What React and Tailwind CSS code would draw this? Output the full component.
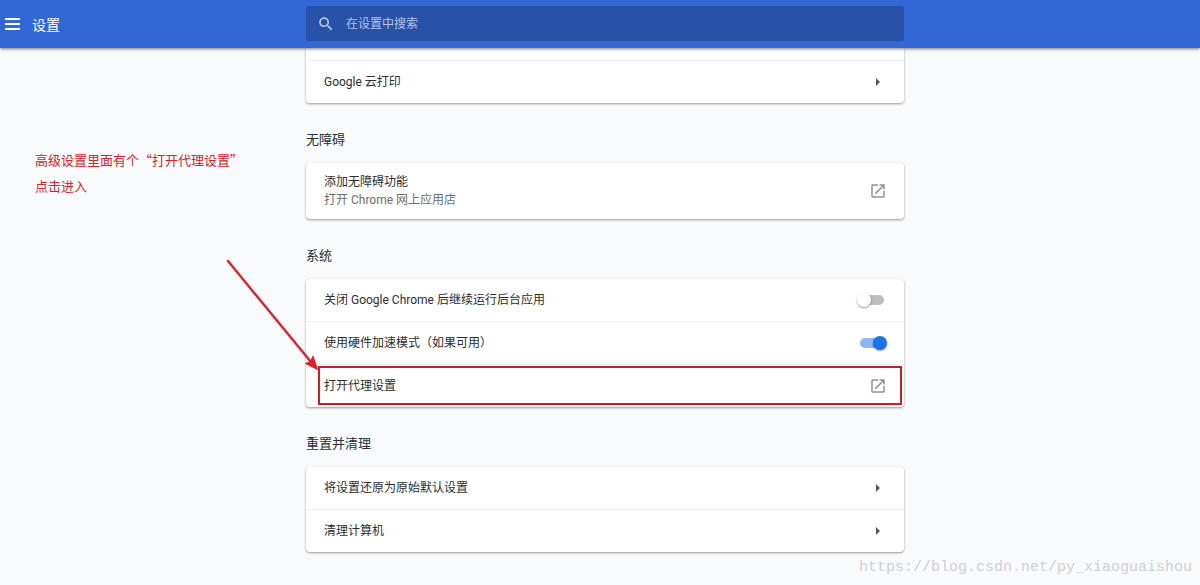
import React from "react";

const columns =
  "grid grid-cols-[minmax(0,calc(50%-294px))_minmax(0,598px)_minmax(0,1fr)]";

function MenuIcon() {
  return (
    <svg width="15" height="12" viewBox="0 0 15 12" fill="currentColor" aria-hidden="true">
      <path d="M0 0h15v2H0zM0 5h15v2H0zM0 10h15v2H0z" />
    </svg>
  );
}

function SearchIcon() {
  return (
    <svg width="18" height="18" viewBox="0 0 24 24" fill="currentColor" aria-hidden="true">
      <path d="M15.5 14h-.79l-.28-.27C15.41 12.59 16 11.11 16 9.5 16 5.91 13.09 3 9.5 3S3 5.91 3 9.5 5.91 16 9.5 16c1.61 0 3.09-.59 4.23-1.57l.27.28v.79l5 4.99L20.49 19l-4.99-5zm-6 0C7.01 14 5 11.99 5 9.5S7.01 5 9.5 5 14 7.01 14 9.5 11.99 14 9.5 14z" />
    </svg>
  );
}

function OpenIcon() {
  return (
    <svg width="18" height="18" viewBox="0 0 24 24" fill="#909498" aria-hidden="true">
      <path d="M19 19H5V5h7V3H5c-1.11 0-2 .9-2 2v14c0 1.1.89 2 2 2h14c1.1 0 2-.9 2-2v-7h-2v7zM14 3v2h3.59l-9.83 9.83 1.41 1.41L19 6.41V10h2V3h-7z" />
    </svg>
  );
}

function ArrowIcon() {
  return (
    <svg width="4" height="8" viewBox="0 0 4 8" fill="#55595d" aria-hidden="true">
      <path d="M0 0l4 4-4 4z" />
    </svg>
  );
}

function Section({ title, children }) {
  return (
    <section>
      <h2 className="pt-[27px] pb-[13px] text-[13px] leading-5 text-[#2b2e32]">{title}</h2>
      <Card>{children}</Card>
    </section>
  );
}

function Card({ children, className = "rounded" }) {
  return (
    <div
      className={
        "divide-y divide-[#eceeef] bg-white shadow-[0_1px_2px_rgba(60,64,67,0.35),0_1px_3px_rgba(60,64,67,0.2)] " +
        className
      }
    >
      {children}
    </div>
  );
}

function LinkRow({ title, note, icon, children }) {
  return (
    <div className="relative">
      <button type="button" className="flex w-full items-center text-left">
        <span className={note ? "flex-1 py-[10px] pl-[18px]" : "flex-1 py-3 pl-[18px]"}>
          <span className="block leading-[18px]">{title}</span>
          {note && <span className="block leading-[18px] text-[#6b6f74]">{note}</span>}
        </span>
        <span className="flex w-[52px] shrink-0 justify-center">{icon}</span>
      </button>
      {children}
    </div>
  );
}

function ToggleRow({ id, title, on }) {
  return (
    <div className="flex items-center">
      <label htmlFor={id} className="flex-1 py-3 pl-[18px] leading-[18px]">
        {title}
      </label>
      <span className="flex w-[52px] shrink-0 pl-2">
        <input
          id={id}
          type="checkbox"
          role="switch"
          defaultChecked={on}
          className="relative h-[10px] w-6 appearance-none rounded-full bg-[#bdbdbf] before:absolute before:-top-[2px] before:-left-[3px] before:size-[14px] before:rounded-full before:bg-white before:shadow-[0_1px_2px_rgba(0,0,0,0.4)] checked:bg-[#8cb6f5] checked:before:left-[13px] checked:before:bg-[#1a73e8]"
        />
      </span>
    </div>
  );
}

function Highlight() {
  return (
    <>
      <span className="pointer-events-none absolute top-px right-[2px] bottom-[2px] left-[12px] border-2 border-[#cf1c24]" />
      <svg
        className="pointer-events-none absolute -top-[106px] -left-[80px]"
        width="94"
        height="114"
        viewBox="0 0 94 114"
        aria-hidden="true"
      >
        <path d="M2 2L85 103" stroke="#e11f27" strokeWidth="2.4" strokeLinecap="round" />
        <path d="M91.5 110.5L79.5 104.5L84.5 102.5L87 97Z" fill="#e11f27" stroke="#e11f27" />
      </svg>
    </>
  );
}

export default function App() {
  return (
    <div className="flex min-h-screen flex-col bg-[#f8fafb] font-[Roboto,'Noto_Sans_CJK_SC',sans-serif] text-[12px] text-[#2b2e32]">
      <header
        className={
          columns +
          " relative z-10 h-12 bg-[#3367d6] text-white shadow-[0_1px_3px_rgba(0,0,0,0.5)]"
        }
      >
        <div className="flex items-center gap-3 pl-[5px]">
          <button type="button" aria-label="菜单">
            <MenuIcon />
          </button>
          <h1 className="pt-px text-[14px] leading-5">设置</h1>
        </div>
        <label className="mt-[6px] flex h-[35px] items-center gap-[11px] rounded-xs bg-[#2851a8] pl-[11px] text-[#c3d0ee]">
          <SearchIcon />
          <input
            type="search"
            aria-label="在设置中搜索"
            placeholder="在设置中搜索"
            className="min-w-0 flex-1 bg-transparent leading-[18px] outline-none placeholder:text-[#b4c4e8]"
          />
        </label>
      </header>

      <div className={columns}>
        <aside
          className="pt-[99px] pl-[35px] font-['Noto_Sans_CJK_SC',sans-serif] text-[13px] leading-[26px] text-[#d8232a]"
          lang="zh-CN"
        >
          <p>高级设置里面有个“打开代理设置”</p>
          <p>点击进入</p>
        </aside>
        <main>
          <Card className="rounded-b">
            <div className="h-[13px]" />
            <LinkRow title="Google 云打印" icon={<ArrowIcon />} />
          </Card>
          <Section title="无障碍">
            <LinkRow title="添加无障碍功能" note="打开 Chrome 网上应用店" icon={<OpenIcon />} />
          </Section>
          <Section title="系统">
            <ToggleRow id="background" title="关闭 Google Chrome 后继续运行后台应用" />
            <ToggleRow id="hardware" title="使用硬件加速模式（如果可用）" on />
            <LinkRow title="打开代理设置" icon={<OpenIcon />}>
              <Highlight />
            </LinkRow>
          </Section>
          <Section title="重置并清理">
            <LinkRow title="将设置还原为原始默认设置" icon={<ArrowIcon />} />
            <LinkRow title="清理计算机" icon={<ArrowIcon />} />
          </Section>
        </main>
      </div>

      <footer className="flex justify-end pt-1 pr-2 font-['Liberation_Mono',monospace] text-[15px] leading-6 text-[#cfd1d2]">
        https://blog.csdn.net/py_xiaoguaishou
      </footer>
    </div>
  );
}
